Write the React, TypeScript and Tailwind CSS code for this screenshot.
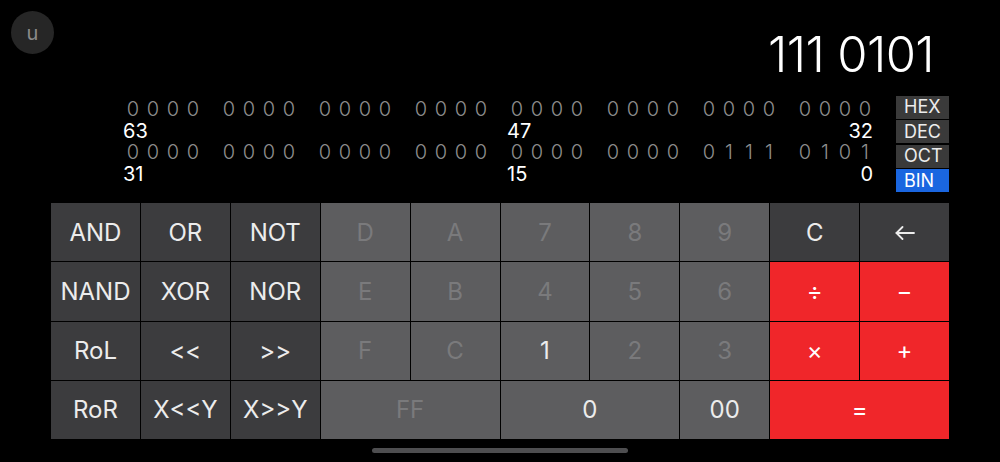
import React from "react";

type Key = {
  label: React.ReactNode;
  kind: "dark" | "mid" | "midOff" | "red";
  span?: number;
};

const Arrow = () => (
  <svg width="20" height="14" viewBox="0 0 20 14" fill="none" stroke="currentColor" strokeWidth="1.8" strokeLinecap="round" strokeLinejoin="round">
    <path d="M19 7H1.5" />
    <path d="M7.5 1L1.5 7l6 6" />
  </svg>
);

const keys: Key[] = [
  { label: "AND", kind: "dark" },
  { label: "OR", kind: "dark" },
  { label: "NOT", kind: "dark" },
  { label: "D", kind: "midOff" },
  { label: "A", kind: "midOff" },
  { label: "7", kind: "midOff" },
  { label: "8", kind: "midOff" },
  { label: "9", kind: "midOff" },
  { label: "C", kind: "dark" },
  { label: <Arrow />, kind: "dark" },

  { label: "NAND", kind: "dark" },
  { label: "XOR", kind: "dark" },
  { label: "NOR", kind: "dark" },
  { label: "E", kind: "midOff" },
  { label: "B", kind: "midOff" },
  { label: "4", kind: "midOff" },
  { label: "5", kind: "midOff" },
  { label: "6", kind: "midOff" },
  { label: "÷", kind: "red" },
  { label: "−", kind: "red" },

  { label: "RoL", kind: "dark" },
  { label: "<<", kind: "dark" },
  { label: ">>", kind: "dark" },
  { label: "F", kind: "midOff" },
  { label: "C", kind: "midOff" },
  { label: "1", kind: "mid" },
  { label: "2", kind: "midOff" },
  { label: "3", kind: "midOff" },
  { label: "×", kind: "red" },
  { label: "+", kind: "red" },

  { label: "RoR", kind: "dark" },
  { label: "X<<Y", kind: "dark" },
  { label: "X>>Y", kind: "dark" },
  { label: "FF", kind: "midOff", span: 2 },
  { label: "0", kind: "mid", span: 2 },
  { label: "00", kind: "mid" },
  { label: "=", kind: "red", span: 2 },
];

const kindClass: Record<Key["kind"], string> = {
  dark: "bg-[#3c3c3e] text-[#ececec]",
  mid: "bg-[#5d5d5f] text-[#ececec]",
  midOff: "bg-[#5d5d5f] text-[#7a7a7c]",
  red: "bg-[#f0262a] text-white",
};

const high = "0000 0000 0000 0000 0000 0000 0000 0000".split(" ");
const low = "0000 0000 0000 0000 0000 0000 0111 0101".split(" ");

function BitRow({ groups }: { groups: string[] }) {
  return (
    <div className="grid grid-cols-8 gap-x-[16px] h-[21.5px] items-center">
      {groups.map((g, i) => (
        <div key={i} className="flex">
          {g.split("").map((d, j) => (
            <span key={j} className="w-[20px] text-center text-[20px] leading-[21px] font-light text-[#8e8e8e]">
              {d}
            </span>
          ))}
        </div>
      ))}
    </div>
  );
}

function LabelRow({ a, b, c }: { a: string; b: string; c: string }) {
  return (
    <div className="grid grid-cols-8 gap-x-[16px] h-[21.5px] items-center text-[20px] leading-[21px] text-white">
      <span className="col-start-1 text-left">{a}</span>
      <span className="col-start-5 text-left">{b}</span>
      <span className="col-start-8 text-right pr-[2px]">{c}</span>
    </div>
  );
}

export default function App() {
  return (
    <div
      className="w-[1000px] h-[462px] bg-black flex flex-col overflow-hidden"
      style={{ fontFamily: "Inter, 'Liberation Sans', sans-serif" }}
    >
      <div className="h-[96px] flex items-start justify-between">
        <div className="ml-[11px] mt-[11px] w-[43px] h-[43px] rounded-full bg-[#262626] flex items-center justify-center text-[20px] text-[#8a8a8a]">
          u
        </div>
        <div className="mr-[66px] mt-[27px] text-[49px] leading-[56px] font-light text-white tracking-[-0.6px]">
          111 0101
        </div>
      </div>

      <div className="h-[96px] flex">
        <div className="ml-[123px] w-[752px] pt-[3px] flex flex-col">
          <BitRow groups={high} />
          <LabelRow a="63" b="47" c="32" />
          <BitRow groups={low} />
          <LabelRow a="31" b="15" c="0" />
        </div>
        <div className="ml-[21px] w-[53px] flex flex-col gap-[1.5px]">
          {["HEX", "DEC", "OCT", "BIN"].map((m) => (
            <div
              key={m}
              className={`h-[23px] pl-[8px] flex items-center text-[18px] leading-none ${
                m === "BIN" ? "bg-[#1a66e0] text-white" : "bg-[#3a3a3a] text-[#ececec]"
              }`}
            >
              {m}
            </div>
          ))}
        </div>
      </div>

      <div className="mt-[11px] ml-[51px] w-[898px] h-[236px] grid grid-cols-10 grid-rows-4 gap-px bg-black">
        {keys.map((k, i) => (
          <div
            key={i}
            className={`flex items-center justify-center text-[24px] pt-[1px] ${kindClass[k.kind]} ${
              k.span === 2 ? "col-span-2" : ""
            }`}
          >
            {k.label}
          </div>
        ))}
      </div>

      <div className="mt-[9px] mx-auto w-[256px] h-[5px] rounded-full bg-[#4e4e50]" />
    </div>
  );
}
